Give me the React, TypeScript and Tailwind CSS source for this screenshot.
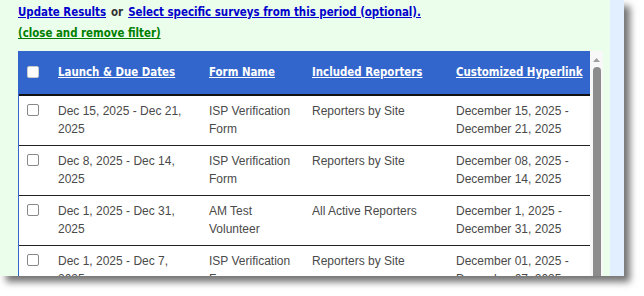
const rows = [
    {
        dates: 'Dec 15, 2025 - Dec 21, 2025',
        form: 'ISP Verification Form',
        reporters: 'Reporters by Site',
        link: 'December 15, 2025 - December 21, 2025',
    },
    {
        dates: 'Dec 8, 2025 - Dec 14, 2025',
        form: 'ISP Verification Form',
        reporters: 'Reporters by Site',
        link: 'December 08, 2025 - December 14, 2025',
    },
    {
        dates: 'Dec 1, 2025 - Dec 31, 2025',
        form: 'AM Test Volunteer',
        reporters: 'All Active Reporters',
        link: 'December 1, 2025 - December 31, 2025',
    },
    {
        dates: 'Dec 1, 2025 - Dec 7, 2025',
        form: 'ISP Verification Form',
        reporters: 'Reporters by Site',
        link: 'December 01, 2025 - December 07, 2025',
    },
]

const headers = ['Launch & Due Dates', 'Form Name', 'Included Reporters', 'Customized Hyperlink']

export default function App() {
    return (
        <div className="h-[296px] w-[644px] overflow-hidden bg-white">
            <div className="flex h-[276px] w-[624px] overflow-hidden shadow-[6px_6px_7px_rgba(0,0,0,0.55)]">
                <div className="flex w-[610px] flex-col bg-[#ebfdeb] pl-[18px]">
                    <div className="font-['DejaVu_Sans_Condensed','DejaVu_Sans',sans-serif] text-[11.4px] font-bold">
                        <p className="flex h-[24px] items-center gap-[5px] pt-[1px]">
                            <a className="text-[#0000cc] underline">Update Results</a>
                            <span className="text-[#333]">or</span>
                            <a className="text-[#0000cc] underline">
                                Select specific surveys from this period (optional).
                            </a>
                        </p>
                        <p className="flex h-[18px] items-center pt-[2px]">
                            <a className="text-[#008000] underline">(close and remove filter)</a>
                        </p>
                    </div>
                    <div className="mt-[9px] flex min-h-0 flex-1">
                        <div className="w-[572px] overflow-hidden border-l border-[#3366cc] bg-white">
                            <table className="w-[571px] table-fixed border-collapse">
                                <colgroup>
                                    <col className="w-[29px]" />
                                    <col className="w-[151px]" />
                                    <col className="w-[103px]" />
                                    <col className="w-[144px]" />
                                    <col className="w-[144px]" />
                                </colgroup>
                                <thead>
                                    <tr className="h-[44px] border-b-2 border-[#111] bg-[#3366cc]">
                                        <th className="pl-[8px] text-left">
                                            <span className="-mt-[2px] block h-[12px] w-[12px] rounded-[2px] border border-[#ccc] bg-white" />
                                        </th>
                                        {headers.map((h) => (
                                            <th
                                                key={h}
                                                className="pl-[10px] text-left font-['DejaVu_Sans_Condensed','DejaVu_Sans',sans-serif] text-[11.4px] font-bold text-white underline"
                                            >
                                                {h}
                                            </th>
                                        ))}
                                    </tr>
                                </thead>
                                <tbody className="font-['Liberation_Sans',Arial,sans-serif] text-[12px] leading-[18px] text-[#4a4a4a]">
                                    {rows.map((r, i) => (
                                        <tr key={i} className="border-b border-[#222] align-top">
                                            <td className="pt-[8px] pl-[8px]">
                                                <span className="block h-[12px] w-[12px] rounded-[2px] border border-[#888] bg-white" />
                                            </td>
                                            <td className="pt-[6px] pr-[8px] pb-[7px] pl-[10px]">{r.dates}</td>
                                            <td className="pt-[6px] pr-[8px] pb-[7px] pl-[10px]">{r.form}</td>
                                            <td className="pt-[6px] pr-[8px] pb-[7px] pl-[10px]">{r.reporters}</td>
                                            <td className="pt-[6px] pr-[8px] pb-[7px] pl-[10px]">{r.link}</td>
                                        </tr>
                                    ))}
                                </tbody>
                            </table>
                        </div>
                        <div className="flex w-[13px] flex-col items-center bg-[#f8f8f8]">
                            <svg width="9" height="8" viewBox="0 0 9 8" className="mt-[5px]">
                                <path d="M1 6 L4.5 2 L8 6 Z" fill="#a0a0a0" />
                            </svg>
                            <div className="mt-[3px] w-[8px] flex-1 rounded-t-[4px] bg-[#8c8c8c]" />
                        </div>
                    </div>
                </div>
                <div className="w-[14px] bg-[#e1effe]" />
            </div>
        </div>
    )
}
